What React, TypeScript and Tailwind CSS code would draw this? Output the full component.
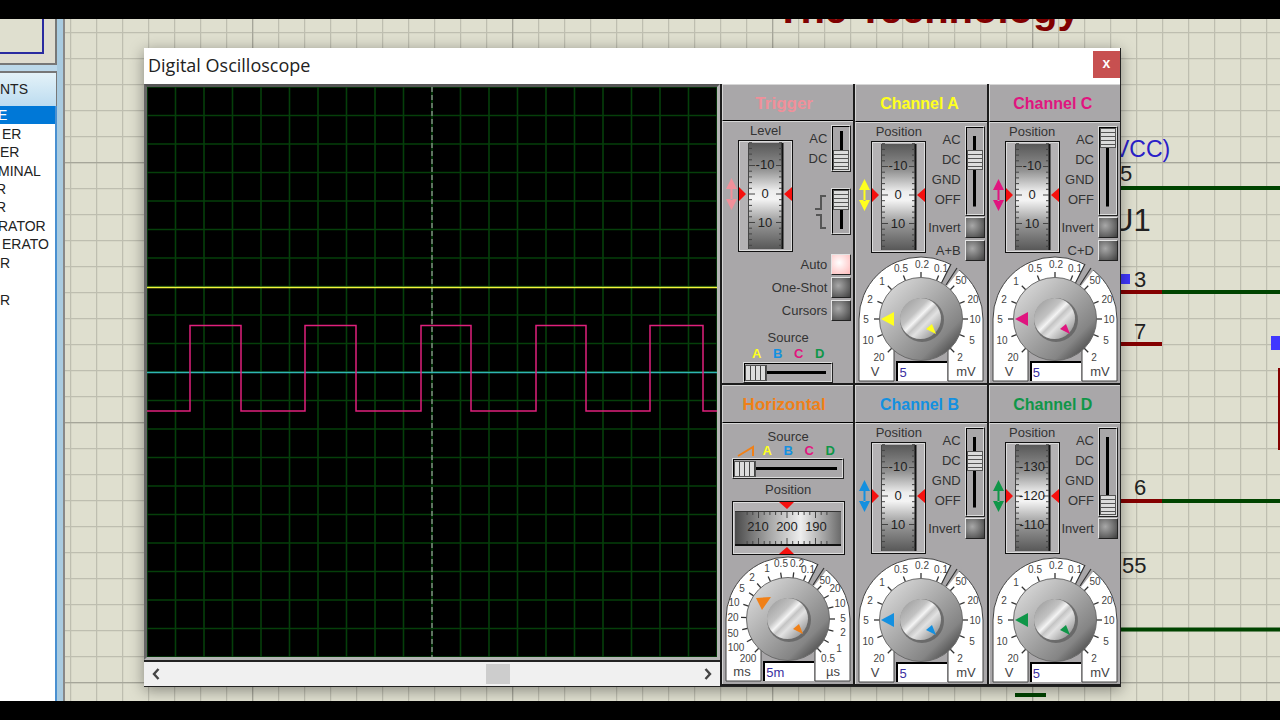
import { useId } from "react";
import type { ReactNode } from "react";

const YELLOW = "#ffff1e";
const BLUE = "#1490e0";
const PINK = "#e0157f";
const GREEN = "#0f9648";
const ORANGE = "#f08018";
const SALMON = "#f0909a";

const DEVICES = [
  { text: "E", indent: "-ml-0.5" },
  { text: "ER", indent: "ml-0.5" },
  { text: "ER", indent: "ml-0" },
  { text: "MINAL", indent: "-ml-0.5" },
  { text: "R", indent: "-ml-1" },
  { text: "R", indent: "-ml-1" },
  { text: "RATOR", indent: "-ml-0.5" },
  { text: "ERATO", indent: "ml-0.5" },
  { text: "R", indent: "ml-0" },
  { text: "", indent: "ml-0" },
  { text: "R", indent: "ml-0" },
];

type DialMark = { text: string; x: number; y: number; angle: number };

const VOLT_MARKS: DialMark[] = [
  { text: "20", x: 21, y: 101, angle: 225 },
  { text: "10", x: 10, y: 84, angle: 202 },
  { text: "5", x: 8, y: 63, angle: 180 },
  { text: "2", x: 12, y: 43, angle: 158 },
  { text: "1", x: 24, y: 25, angle: 135 },
  { text: "0.5", x: 43, y: 12, angle: 112 },
  { text: "0.2", x: 64, y: 8, angle: 90 },
  { text: "0.1", x: 83, y: 12, angle: 68 },
  { text: "50", x: 103, y: 24, angle: 45 },
  { text: "20", x: 115, y: 43, angle: 22 },
  { text: "10", x: 117, y: 63, angle: 0 },
  { text: "5", x: 114, y: 84, angle: -22 },
  { text: "2", x: 102, y: 101, angle: -45 },
];

const TIME_MARKS: DialMark[] = [
  { text: "200", x: 23, y: 102, angle: 225 },
  { text: "100", x: 11, y: 91, angle: 209 },
  { text: "50", x: 8, y: 77, angle: 193 },
  { text: "20", x: 8, y: 61, angle: 178 },
  { text: "10", x: 9, y: 46, angle: 162 },
  { text: "5", x: 17, y: 32, angle: 146 },
  { text: "2", x: 27, y: 21, angle: 131 },
  { text: "1", x: 42, y: 12, angle: 115 },
  { text: "0.5", x: 56, y: 7, angle: 99 },
  { text: "0.2", x: 72, y: 7, angle: 83 },
  { text: "0.1", x: 83, y: 13, angle: 68 },
  { text: "50", x: 100, y: 24, angle: 45 },
  { text: "20", x: 110, y: 32, angle: 30 },
  { text: "10", x: 115, y: 47, angle: 15 },
  { text: "5", x: 118, y: 62, angle: 0 },
  { text: "2", x: 118, y: 76, angle: -15 },
  { text: "1", x: 114, y: 92, angle: -30 },
  { text: "0.5", x: 103, y: 102, angle: -45 },
];

function Dial({ color, marks, left, right, value, pointer, labelId }: {
  color: string; marks: DialMark[]; left: string; right: string; value: string; pointer: string; labelId: string;
}) {
  const id = useId();
  return (
    <div className="relative mx-auto w-[126px]">
      <svg viewBox="0 0 126 126" className="block w-full" fontSize="10" textAnchor="middle" fill="#444">
        <defs>
          <linearGradient id={`${id}knob`} x1="0.1" y1="0.1" x2="0.9" y2="0.9">
            <stop offset="0" stopColor="#d8d8d8" />
            <stop offset="0.45" stopColor="#a9a9a9" />
            <stop offset="0.8" stopColor="#858585" />
            <stop offset="1" stopColor="#484848" />
          </linearGradient>
          <linearGradient id={`${id}cap`} x1="0.15" y1="0.15" x2="0.85" y2="0.85">
            <stop offset="0" stopColor="#a8a8a8" />
            <stop offset="0.3" stopColor="#c2c2c2" />
            <stop offset="0.45" stopColor="#f4f4f4" />
            <stop offset="0.55" stopColor="#c4c4c4" />
            <stop offset="0.68" stopColor="#e2e2e2" />
            <stop offset="1" stopColor="#a0a0a0" />
          </linearGradient>
        </defs>
        <path d="M1 125V63A62 62 0 0 1 125 63V125H90V90H36V125Z" fill="#fff" stroke="#444" />
        <path d="M95 3L84 27L89 30L104 11Z" fill="#a9a7a9" />
        <path d="M93 8L83 28M99 12L88 29" stroke="#333" strokeWidth="1.2" />
        {marks.map((m, i) => (
          <line key={i} x1="103" x2="110" y1="63" y2="63" stroke="#333" strokeWidth="1.3" transform={`rotate(${-m.angle} 63 63)`} />
        ))}
        {marks.map((m, i) => (
          <text key={i} x={m.x} y={m.y + 4}>{m.text}</text>
        ))}
        <text x="17" y="120" fontSize="13">{left}</text>
        <text x="108" y="120" fontSize="13">{right}</text>
        <circle cx="63" cy="63" r="41.5" fill={`url(#${id}knob)`} stroke="#6a6a6a" />
        <circle cx="64" cy="64" r="22" fill="#5e5e5e" opacity="0.75" />
        <circle cx="62.5" cy="62.5" r="20.5" fill={`url(#${id}cap)`} />
        <path d={pointer} fill={color} />
        <path d="M68 73L74 68L78 78Z" fill={color} />
      </svg>
      <input
        aria-labelledby={labelId}
        defaultValue={value}
        className="absolute bottom-px left-[38px] h-5 w-[51px] border-t-2 border-l-2 border-black bg-white pl-px text-[13px] text-[#3a30a0] outline-none"
      />
    </div>
  );
}

const TICKS = [-9, -8, -7, -6, -5, -4, -3, -2, -1, 0, 1, 2, 3, 4, 5, 6, 7, 8, 9];

function Wheel({ values }: { values: string[] }) {
  const id = useId();
  return (
    <svg viewBox="0 0 55 112" className="block h-[112px] w-[55px]" fontSize="13" textAnchor="middle">
      <defs>
        <linearGradient id={id} x1="0" y1="0" x2="0" y2="1">
          <stop offset="0" stopColor="#585858" />
          <stop offset="0.25" stopColor="#929292" />
          <stop offset="0.45" stopColor="#ededed" />
          <stop offset="0.53" stopColor="#f4f4f4" />
          <stop offset="0.75" stopColor="#989898" />
          <stop offset="1" stopColor="#585858" />
        </linearGradient>
      </defs>
      <rect x="1" y="1" width="53" height="110" fill="#b4b2b4" stroke="#dcdcdc" strokeWidth="2" />
      <rect x="0.5" y="0.5" width="54" height="111" fill="none" stroke="#111" />
      <rect x="10" y="3" width="35" height="106" fill={`url(#${id})`} />
      <path d="M10.500 3V109" stroke="#444" />
      <path d="M44.500 3V109" stroke="#111" strokeWidth="2" />
      {TICKS.map((t) => {
        const y = 54 + t * 5.7;
        return <path key={t} d={t % 5 === 0 ? `M11 ${y}H17M38 ${y}H44` : `M11 ${y}H14M41 ${y}H44`} stroke="#444" />;
      })}
      <path d="M1 47L8 54L1 61ZM54 47L46 54L54 61Z" fill="#f5100e" />
      {values.map((v, i) => (
        <text key={v} x="27" y={29 + i * 29} fill="#222">{v}</text>
      ))}
    </svg>
  );
}

function FlatWheel({ values }: { values: string[] }) {
  const id = useId();
  return (
    <svg viewBox="0 0 113 54" className="mx-auto block h-[54px] w-[113px]" fontSize="13" textAnchor="middle">
      <defs>
        <linearGradient id={id}>
          <stop offset="0" stopColor="#4a4a4a" />
          <stop offset="0.3" stopColor="#a0a0a0" />
          <stop offset="0.62" stopColor="#eeeeee" />
          <stop offset="0.85" stopColor="#a0a0a0" />
          <stop offset="1" stopColor="#6a6a6a" />
        </linearGradient>
      </defs>
      <rect x="1" y="1" width="111" height="52" fill="#b4b2b4" stroke="#dcdcdc" strokeWidth="2" />
      <rect x="0.5" y="0.5" width="112" height="53" fill="none" stroke="#111" />
      <rect x="3" y="10" width="106" height="34" fill={`url(#${id})`} />
      <path d="M3 10.500H109" stroke="#333" />
      <path d="M3 44H109" stroke="#111" strokeWidth="2" />
      {TICKS.slice(2, 17).map((t) => {
        const x = 55 + t * 5.7;
        return <path key={t} d={t % 5 === 0 ? `M${x} 11V17M${x} 37V43` : `M${x} 11V14M${x} 40V43`} stroke="#444" />;
      })}
      <path d="M47 1H62L55 8ZM47 53H62L55 46Z" fill="#f5100e" />
      {values.map((v, i) => (
        <text key={v} x={26 + i * 29} y="30" fill="#222">{v}</text>
      ))}
    </svg>
  );
}

function Switch({ max, value, labelId, className }: { max: number; value: number; labelId: string; className: string }) {
  return (
    <div className={`w-5 shrink-0 border border-t-[#dcdcdc] border-r-[#222] border-b-[#222] border-l-[#dcdcdc] ${className}`}>
      <input
        type="range"
        min={0}
        max={max}
        defaultValue={value}
        aria-labelledby={labelId}
        className="block h-full w-full appearance-none border border-t-black border-r-[#dcdcdc] border-b-[#dcdcdc] border-l-black bg-[linear-gradient(#000,#000)] bg-[length:3px_82%] bg-center bg-no-repeat [writing-mode:vertical-lr] [&::-webkit-slider-thumb]:h-5 [&::-webkit-slider-thumb]:w-4 [&::-webkit-slider-thumb]:appearance-none [&::-webkit-slider-thumb]:border [&::-webkit-slider-thumb]:border-[#555] [&::-webkit-slider-thumb]:bg-[repeating-linear-gradient(#dcdcdc_0_3px,#555_3px_4px)]"
      />
    </div>
  );
}

function SourceSlider({ max, labelId, className }: { max: number; labelId: string; className: string }) {
  return (
    <div className={`mx-auto h-[21px] border border-t-[#dcdcdc] border-r-[#222] border-b-[#222] border-l-[#dcdcdc] ${className}`}>
      <input
        type="range"
        min={0}
        max={max}
        defaultValue={0}
        aria-labelledby={labelId}
        className="block h-full w-full appearance-none border border-t-black border-r-[#dcdcdc] border-b-[#dcdcdc] border-l-black bg-[linear-gradient(#000,#000)] bg-[length:90%_3px] bg-center bg-no-repeat [&::-webkit-slider-thumb]:h-4 [&::-webkit-slider-thumb]:w-[22px] [&::-webkit-slider-thumb]:appearance-none [&::-webkit-slider-thumb]:border [&::-webkit-slider-thumb]:border-[#555] [&::-webkit-slider-thumb]:bg-[repeating-linear-gradient(90deg,#dcdcdc_0_4px,#444_4px_5px)]"
      />
    </div>
  );
}

function PushButton({ label, lit }: { label: string; lit?: boolean }) {
  const id = useId();
  return (
    <div className="flex h-[23px] items-center justify-end gap-1 pr-0.5">
      <label htmlFor={id} className="whitespace-nowrap">{label}</label>
      <button
        id={id}
        type="button"
        className={`h-[21px] w-5 shrink-0 border border-t-[#e4e4e4] border-r-[#222] border-b-[#222] border-l-[#e4e4e4] ${
          lit
            ? "bg-[radial-gradient(circle_at_40%_40%,#ffffff,#ffb9b9)]"
            : "bg-[radial-gradient(circle_at_35%_40%,#a8a8a8,#3e3e3e)]"
        }`}
      />
    </div>
  );
}

function UpDown({ color }: { color: string }) {
  return (
    <div className="flex w-[15px] justify-end pt-[56px] pr-px">
      <svg viewBox="0 0 11 32" className="h-8 w-[11px]" fill={color}>
        <path d="M5.500 0L11 11H0ZM5.500 32L11 21H0ZM4.500 10H6.500V22H4.500Z" />
      </svg>
    </div>
  );
}

function Panel({ id, title, color, size, children }: {
  id: string; title: string; color: string; size: string; children: ReactNode;
}) {
  return (
    <section className="flex h-[301px] flex-col border-b-2 border-l-2 border-[#1c1c1c]">
      <h2
        id={id}
        style={{ color }}
        className={`flex h-[38px] items-center justify-center border-t border-b border-l border-t-[#d6d6d6] border-b-black border-l-[#d6d6d6] pt-0.5 font-bold ${size}`}
      >
        {title}
      </h2>
      <div className="flex-1 border-t border-l border-[#d6d6d6]">{children}</div>
    </section>
  );
}

function Channel({ name, color, values, coupling, sum }: {
  name: string; color: string; values: string[]; coupling: number; sum?: string;
}) {
  const id = useId();
  return (
    <Panel id={id} title={`Channel ${name}`} color={color} size="pr-1 text-[16px]">
      <div className="flex h-[139px]">
        <UpDown color={color} />
        <div>
          <div className="text-center leading-[18px]">Position</div>
          <Wheel values={values} />
        </div>
        <div className="flex-1">
          <div className="flex h-[93px] justify-end gap-1 pt-[3px] pr-0.5">
            <div id={`${id}sw`} className="pt-1 text-right leading-5">
              <div>AC</div>
              <div>DC</div>
              <div>GND</div>
              <div>OFF</div>
            </div>
            <Switch max={3} value={coupling} labelId={`${id} ${id}sw`} className="h-[90px]" />
          </div>
          <PushButton label="Invert" />
          {sum && <PushButton label={sum} />}
        </div>
      </div>
      <div className="-mt-1.5">
        <Dial color={color} marks={VOLT_MARKS} left="V" right="mV" value="5" pointer="M23 63L36 56V70Z" labelId={id} />
      </div>
    </Panel>
  );
}

function SourceLetters() {
  return (
    <>
      <span className="w-[21px]" style={{ color: YELLOW }}>A</span>
      <span className="w-[21px]" style={{ color: BLUE }}>B</span>
      <span className="w-[21px]" style={{ color: PINK }}>C</span>
      <span className="w-[21px]" style={{ color: GREEN }}>D</span>
    </>
  );
}

function Trigger() {
  const id = useId();
  return (
    <Panel id={id} title="Trigger" color={SALMON} size="pr-2 text-[17px]">
      <div className="flex h-[131px]">
        <UpDown color={SALMON} />
        <div>
          <div className="text-center leading-[18px]">Level</div>
          <Wheel values={["-10", "0", "10"]} />
        </div>
        <div className="flex flex-1 flex-col gap-4 pt-[3px] pr-0.5">
          <div className="flex justify-end gap-1">
            <div id={`${id}sw`} className="pt-1 text-right leading-5">
              <div>AC</div>
              <div>DC</div>
            </div>
            <Switch max={1} value={1} labelId={`${id} ${id}sw`} className="h-[47px]" />
          </div>
          <div className="flex items-center justify-end gap-1">
            <svg viewBox="0 0 12 38" className="h-[38px] w-3" fill="none" stroke="#555" strokeWidth="2">
              <path d="M0 16H6V3H11M1 22H6V35H11" />
            </svg>
            <Switch max={1} value={0} labelId={id} className="h-[47px]" />
          </div>
        </div>
      </div>
      <PushButton label="Auto" lit />
      <PushButton label="One-Shot" />
      <PushButton label="Cursors" />
      <div className="pt-2 text-center leading-4" id={`${id}src`}>Source</div>
      <div className="flex justify-center text-center font-bold leading-4">
        <SourceLetters />
      </div>
      <SourceSlider max={3} labelId={`${id}src`} className="w-[90px]" />
    </Panel>
  );
}

function Horizontal() {
  const id = useId();
  return (
    <Panel id={id} title="Horizontal" color={ORANGE} size="pr-2 text-[17px]">
      <div className="pt-1.5 text-center leading-[14px]" id={`${id}src`}>Source</div>
      <div className="flex items-center justify-center text-center font-bold leading-[14px]">
        <svg viewBox="0 0 21 12" className="h-3 w-[21px]" fill="none" stroke={ORANGE} strokeWidth="2">
          <path d="M2 11L17 2V11" />
        </svg>
        <SourceLetters />
      </div>
      <SourceSlider max={4} labelId={`${id}src`} className="w-[112px]" />
      <div className="py-1 text-center leading-[14px]">Position</div>
      <FlatWheel values={["210", "200", "190"]} />
      <div className="pt-px">
        <Dial color={ORANGE} marks={TIME_MARKS} left="ms" right="µs" value="5m" pointer="M31 42L46 41L37 54Z" labelId={id} />
      </div>
    </Panel>
  );
}

function Display() {
  const lines = Array.from({ length: 21 }, (_, i) => i * 28.5);
  return (
    <svg viewBox="0 0 570 570" preserveAspectRatio="none" className="block h-0 min-h-full w-full bg-black" fill="none">
      {lines.map((p) => (
        <path key={p} d={`M${p} 0V570M0 ${p}H570`} stroke="#053f0a" strokeWidth="1.6" />
      ))}
      <path d="M285 0V570" stroke="#b8b8b8" strokeDasharray="5 3" />
      <path d="M0 200.500H570" stroke="#f4f43c" strokeWidth="1.6" />
      <path d="M0 285.500H570" stroke="#2fb4b4" strokeWidth="1.4" />
      <path
        d="M0 324H43V238.500H94V324H158V238.500H209V324H274V238.500H324V324H389V238.500H439V324H503V238.500H556V324H570"
        stroke="#e0207c"
        strokeWidth="1.5"
      />
    </svg>
  );
}

function Oscilloscope() {
  return (
    <div className="absolute top-[29px] right-[159px] left-[79px] border-r border-b border-[#222] bg-[#a9a7a9] font-['Liberation_Sans',Arial,sans-serif] text-[13px] text-[#333] shadow-[0_3px_14px_rgba(0,0,0,0.4)]">
      <header className="flex h-[36px] items-start justify-between bg-white pl-1">
        <h1 className="font-['Open_Sans','Noto_Sans',sans-serif] text-[18px] leading-[35px] text-[#222]">Digital Oscilloscope</h1>
        <button type="button" className="mt-[3px] h-[27px] w-[27px] bg-[#c75050] pb-0.5 text-[14px] font-bold text-white">x</button>
      </header>
      <div className="flex">
        <div className="flex min-w-0 flex-1 flex-col">
          <div className="min-h-0 flex-1 border-3 border-t-[#555] border-r-[#b4b4b4] border-b-[#b4b4b4] border-l-[#666]">
            <Display />
          </div>
          <div className="flex h-[26px] items-center border-t-2 border-[#222] bg-[#f0f0f0]">
            <button type="button" className="flex h-full w-6 items-center justify-center">
              <svg viewBox="0 0 8 12" className="h-3 w-2" fill="none" stroke="#444" strokeWidth="2.4">
                <path d="M6.500 1L2 6L6.500 11" />
              </svg>
            </button>
            <input
              type="range"
              defaultValue={63}
              className="h-5 min-w-0 flex-1 appearance-none bg-transparent [&::-webkit-slider-thumb]:h-5 [&::-webkit-slider-thumb]:w-6 [&::-webkit-slider-thumb]:appearance-none [&::-webkit-slider-thumb]:bg-[#cdcdcd]"
            />
            <button type="button" className="flex h-full w-6 items-center justify-center">
              <svg viewBox="0 0 8 12" className="h-3 w-2" fill="none" stroke="#444" strokeWidth="2.4">
                <path d="M1.500 1L6 6L1.500 11" />
              </svg>
            </button>
          </div>
        </div>
        <div className="grid w-[400px] shrink-0 grid-cols-3">
          <Trigger />
          <Channel name="A" color={YELLOW} values={["-10", "0", "10"]} coupling={1} sum="A+B" />
          <Channel name="C" color={PINK} values={["-10", "0", "10"]} coupling={0} sum="C+D" />
          <Horizontal />
          <Channel name="B" color={BLUE} values={["-10", "0", "10"]} coupling={1} />
          <Channel name="D" color={GREEN} values={["-130", "-120", "-110"]} coupling={3} />
        </div>
      </div>
    </div>
  );
}

// Grid squares are 26px, with every tenth line drawn darker.
function SheetGrid() {
  return (
    <svg className="absolute inset-0 h-full w-full">
      <defs>
        <pattern id="minor" width="26" height="26" patternUnits="userSpaceOnUse" x="5" y="13">
          <path d="M0.500 0V26M0 0.500H26" stroke="#bebeb0" strokeWidth="1.5" />
        </pattern>
        <pattern id="major" width="260" height="260" patternUnits="userSpaceOnUse" x="187" y="143">
          <path d="M0.500 0V260M0 0.500H260" stroke="#a6a69a" strokeWidth="1.5" />
        </pattern>
      </defs>
      <rect width="100%" height="100%" fill="#dfdfcf" />
      <rect width="100%" height="100%" fill="url(#minor)" />
      <rect width="100%" height="100%" fill="url(#major)" />
    </svg>
  );
}

function Schematic() {
  return (
    <svg viewBox="0 0 520 682" className="absolute top-0 right-0 h-[682px] w-[520px] font-['Liberation_Sans',Arial,sans-serif]" fontSize="22" fill="#222">
      <text x="16" y="4" fontSize="40" fontWeight="bold" fill="#800000">The Technology</text>
      <path d="M361 169H520M402 273H520M402 482H520M361 610.500H520M255 676H286" stroke="#004400" strokeWidth="4" />
      <path d="M361 273H402M361 325H402M361 482H402" stroke="#840000" strokeWidth="4" />
      <path d="M361 255H370V265H361ZM511 317H520V331H511Z" fill="#4038ff" />
      <path d="M518 349H520V431H518Z" fill="#840000" />
      <text x="354" y="138" fontSize="23" fill="#2a20c8">VCC)</text>
      <text x="360" y="162">5</text>
      <text x="351" y="212" fontSize="31">U1</text>
      <text x="374" y="268">3</text>
      <text x="374" y="320">7</text>
      <text x="374" y="476">6</text>
      <text x="362" y="554">55</text>
    </svg>
  );
}

function Sidebar() {
  return (
    <aside className="flex w-[57px] shrink-0 flex-col overflow-hidden bg-[#bcd8ea] font-['Liberation_Sans',Arial,sans-serif] text-[14px] text-[#222]">
      <div className="h-[46px] border-r-2 border-b-2 border-[#777] bg-[#dfdcd0]">
        <div className="h-[35px] w-[44px] border-r-2 border-b-2 border-[#2a2aa0] bg-[#dfdfcf]" />
      </div>
      <div className="mt-1.5 flex h-[35px] items-center border-t-2 border-r border-[#777] bg-linear-to-b from-[#e4f2f8] to-[#bcdcf0]">NTS</div>
      <div className="flex-1 border-r-2 border-[#4a90d0] bg-white">
        <ul className="flex h-[203px] flex-col">
          {DEVICES.map((d, i) => (
            <li key={i} className={`flex flex-1 items-center ${i === 0 ? "bg-[#0078d7] text-white" : ""}`}>
              <span className={`leading-[18px] ${d.indent}`}>{d.text}</span>
            </li>
          ))}
        </ul>
      </div>
    </aside>
  );
}

export default function App() {
  return (
    <div className="flex h-screen min-h-[720px] flex-col overflow-hidden bg-black py-[19px]">
      <div className="flex min-h-0 flex-1">
        <Sidebar />
        <div className="w-2 shrink-0 border-r-2 border-[#888] bg-[#a9cbe0]" />
        <main className="relative min-w-0 flex-1 overflow-hidden">
          <SheetGrid />
          <Schematic />
          <Oscilloscope />
        </main>
      </div>
    </div>
  );
}
